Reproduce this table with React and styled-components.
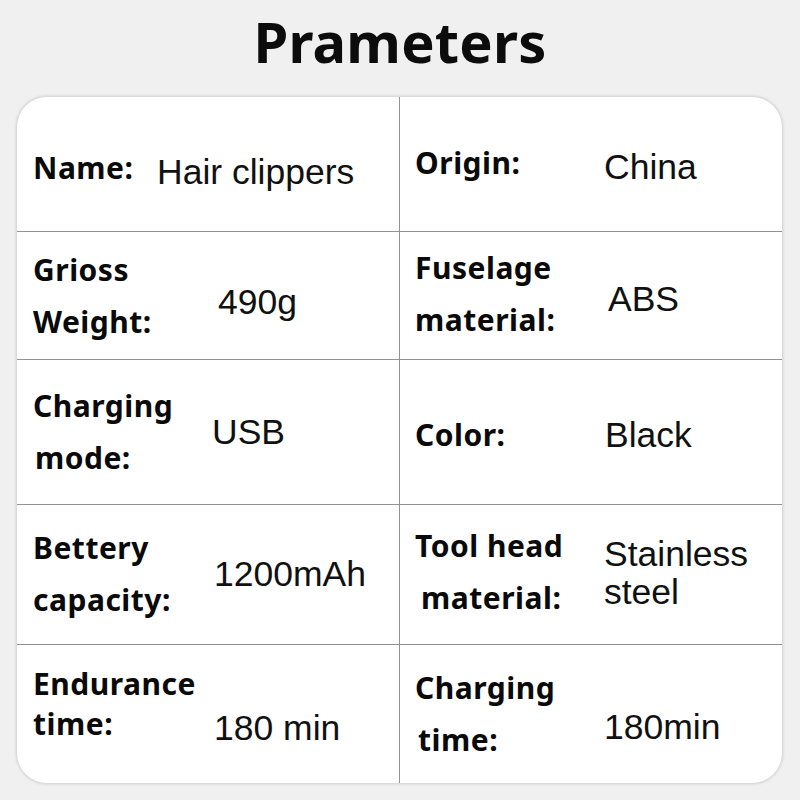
import React from "react";
import styled, { createGlobalStyle } from "styled-components";

const Global = createGlobalStyle`
  html, body { margin: 0; padding: 0; background: #f0f0f0; }
  body { width: 800px; height: 800px; overflow: hidden; }
`;

const Page = styled.div`
  width: 800px;
  height: 800px;
  background: #f0f0f0;
  display: flex;
  flex-direction: column;
  align-items: stretch;
`;

const Title = styled.h1`
  margin: 0;
  height: 97px;
  display: flex;
  align-items: center;
  justify-content: center;
  font-family: "Noto Sans", sans-serif;
  font-weight: 700;
  font-size: 56px;
  color: #0c0c0c;
  letter-spacing: 0.2px;
  padding-bottom: 16px;
  box-sizing: border-box;
`;

const Card = styled.div`
  margin-left: 17px;
  width: 765px;
  height: 686px;
  background: #ffffff;
  border-radius: 30px;
  box-shadow: 0 0 3px 1px rgba(0, 0, 0, 0.14);
  overflow: hidden;
  display: grid;
  grid-template-columns: 383px 382px;
  grid-template-rows: 135px 128px 145px 140px 138px;
`;

const Cell = styled.div`
  display: flex;
  align-items: center;
  padding-left: ${(p) => p.$pad}px;
  border-right: ${(p) => (p.$left ? "1.5px solid #929292" : "none")};
  border-bottom: ${(p) => (p.$last ? "none" : "1.5px solid #929292")};
  box-sizing: border-box;
`;

const Label = styled.div`
  flex: none;
  width: ${(p) => p.$w}px;
  margin-top: ${(p) => (p.$dy || 0) * 2}px;
  font-family: "Noto Sans", sans-serif;
  font-weight: 700;
  font-size: 30px;
  letter-spacing: 0.5px;
  line-height: ${(p) => p.$lh || 52}px;
  color: #0a0a0a;
  white-space: nowrap;
`;

const Line = styled.div`
  padding-left: ${(p) => p.$indent || 0}px;
`;

const Value = styled.div`
  margin-top: ${(p) => (p.$dy || 0) * 2}px;
  font-family: "Liberation Sans", Arial, sans-serif;
  font-size: 35.5px;
  line-height: 38px;
  color: #111111;
  white-space: nowrap;
`;

const rows = [
  [
    { label: ["Name:"], w: 124, ldy: 3.5, value: ["Hair clippers"], vdy: 7.5 },
    { label: ["Origin:"], w: 189, ldy: -1.5, value: ["China"], vdy: 2.5 },
  ],
  [
    { label: ["Grioss", "Weight:"], w: 185, ldy: 0, value: ["490g"], vdy: 6 },
    { label: ["Fuselage", "material:"], w: 193, ldy: -2, value: ["ABS"], vdy: 3 },
  ],
  [
    { label: ["Charging", "mode:"], w: 179, ldy: 0, value: ["USB"], vdy: 0, indent: [0, 2] },
    { label: ["Color:"], w: 190, ldy: 2.5, value: ["Black"], vdy: 2.5 },
  ],
  [
    { label: ["Bettery", "capacity:"], w: 181, ldy: -1, value: ["1200mAh"], vdy: -1 },
    { label: ["Tool head", "material:"], w: 189, ldy: -3, value: ["Stainless", "steel"], vdy: -2, indent: [0, 6] },
  ],
  [
    { label: ["Endurance", "time:"], w: 181, ldy: -10, lh: 40, value: ["180 min"], vdy: 14 },
    { label: ["Charging", "time:"], w: 189, ldy: 0, value: ["180min"], vdy: 13, indent: [0, 3] },
  ],
];

export default function App() {
  return (
    <Page>
      <Global />
      <Title>Prameters</Title>
      <Card>
        {rows.map((row, ri) =>
          row.map((c, ci) => (
            <Cell
              key={`${ri}-${ci}`}
              $left={ci === 0}
              $last={ri === rows.length - 1}
              $pad={ci === 0 ? 16 : 15}
            >
              <Label $w={c.w} $dy={c.ldy} $lh={c.lh}>
                {c.label.map((l, i) => (
                  <Line key={i} $indent={c.indent ? c.indent[i] : 0}>
                    {l}
                  </Line>
                ))}
              </Label>
              <Value $dy={c.vdy}>
                {c.value.map((v, i) => (
                  <div key={i}>{v}</div>
                ))}
              </Value>
            </Cell>
          ))
        )}
      </Card>
    </Page>
  );
}
